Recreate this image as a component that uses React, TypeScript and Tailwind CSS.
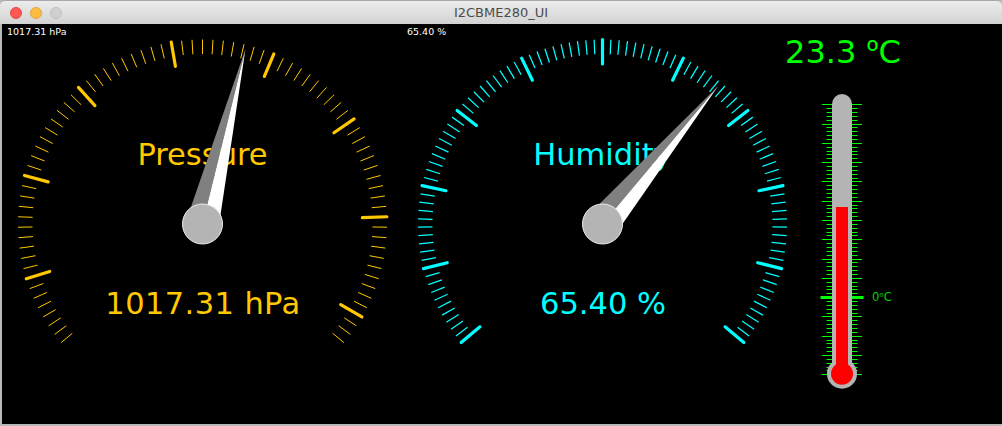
type Tick = { x1: number; y1: number; x2: number; y2: number }

function polar(cx: number, cy: number, r: number, deg: number) {
  const a = (deg * Math.PI) / 180
  return { x: cx + r * Math.sin(a), y: cy - r * Math.cos(a) }
}

function makeTick(cx: number, cy: number, r1: number, r2: number, deg: number): Tick {
  const a = polar(cx, cy, r1, deg)
  const b = polar(cx, cy, r2, deg)
  return { x1: a.x, y1: a.y, x2: b.x, y2: b.y }
}

function Gauge({
  color,
  label,
  value,
  reading,
  steps,
  majorOffset,
  needle,
  minorWidth,
  valueSpacing,
}: {
  color: string
  label: string
  value: string
  reading: string
  steps: number
  majorOffset: number
  needle: number
  minorWidth: number
  valueSpacing: number
}) {
  const cx = 200.5
  const cy = 200
  const step = 260 / steps
  const ticks = Array.from({ length: steps + 1 }, (_, i) => i)
  const tip = polar(cx, cy, 180, needle)
  const baseL = polar(cx, cy, 16.5, needle - 90)
  const baseR = polar(cx, cy, 16.5, needle + 90)

  return (
    <div className="relative w-[400px] shrink-0">
      <span className="absolute left-[5px] top-[2px] text-[9.5px] leading-[12px] text-white">
        {reading}
      </span>
      <svg width="400" height="400" viewBox="0 0 400 400" className="block">
        {ticks.map((i) => {
          const major = i % 10 === majorOffset
          const t = makeTick(cx, cy, 184.5, major ? 160 : 170, -130 + i * step)
          return (
            <line
              key={i}
              {...t}
              stroke={color}
              strokeWidth={major ? 3.2 : minorWidth}
              strokeLinecap={major ? "round" : "butt"}
            />
          )
        })}
        <text x={cx} y={141} textAnchor="middle" fontSize="30.5" fill={color}>
          {label}
        </text>
        <text
          x={cx + 0.5}
          y={290}
          textAnchor="middle"
          fontSize="30.5"
          fill={color}
          letterSpacing={valueSpacing}
        >
          {value}
        </text>
        <polygon points={`${tip.x},${tip.y} ${baseL.x},${baseL.y} ${cx},${cy}`} fill="#808080" />
        <polygon points={`${tip.x},${tip.y} ${baseR.x},${baseR.y} ${cx},${cy}`} fill="#ffffff" />
        <circle cx={cx} cy={cy} r="20" fill="#b4b4b4" stroke="#eeeeee" strokeWidth="1" />
      </svg>
    </div>
  )
}

function Thermometer() {
  const cx = 40
  const top = 80.3
  const step = 270 / 70
  const ticks = Array.from({ length: 71 }, (_, i) => i)

  return (
    <div className="flex-1">
      <div className="flex h-[47px] w-[82px] justify-center pt-[7px]">
        <span className="text-[32px] leading-[40px] whitespace-nowrap text-[#00ff00]">
          23.3 <span className="font-['Noto_Sans',sans-serif]">º</span>C
        </span>
      </div>
      {/* heading above takes 47px, so the drawing starts there */}
      <svg width="200" height="333" viewBox="0 47 200 333" className="block">
        {ticks.map((i) => {
          const y = Math.round(top + i * step) + 0.5
          const zero = i === 50
          const major = i % 5 === 0
          const half = zero ? 21.5 : major ? 20 : 15.5
          return (
            <line
              key={i}
              x1={cx - half}
              x2={cx + half}
              y1={y}
              y2={y}
              stroke="#00ff00"
              strokeWidth={zero ? 3 : 1}
            />
          )
        })}
        <rect x={cx - 10} y={70} width="20" height="280" rx="10" fill="#b4b4b4" />
        <circle cx={cx} cy={349.7} r="15" fill="#b4b4b4" />
        <rect x={cx - 6} y={183} width="12" height="166" fill="#ff0000" />
        <circle cx={cx} cy={349.7} r="11" fill="#ff0000" />
        <text x={70} y={277} fontSize="11.5" fill="#00d000">
          0<tspan className="font-['Noto_Sans',sans-serif]">º</tspan>C
        </text>
      </svg>
    </div>
  )
}

export default function App() {
  return (
    <div className="h-[426px] w-[1002px] overflow-hidden bg-[#b9b9b9] font-['DejaVu_Sans','Noto_Sans',sans-serif]">
      <div className="relative flex h-[24px] items-center justify-center rounded-t-[5px] border-t border-[#a8a8a8] bg-gradient-to-b from-[#ececec] to-[#d3d3d3] pt-[1px]">
        <div className="absolute left-[10px] flex gap-[8px]">
          <span className="h-[12px] w-[12px] rounded-full border border-[#e2463f] bg-[#fc5753]" />
          <span className="h-[12px] w-[12px] rounded-full border border-[#e1a73e] bg-[#fdbc40]" />
          <span className="h-[12px] w-[12px] rounded-full border border-[#c0c0c0] bg-[#d0d0d0]" />
        </div>
        <span className="text-[13px] text-[#4c4c4c]">I2CBME280_UI</span>
      </div>
      <div className="ml-[2px] flex h-[400px] bg-black">
        <Gauge color="#ffc800" label="Pressure" value="1017.31 hPa" reading="1017.31 hPa" steps={80} majorOffset={7} needle={13.8} minorWidth={1} valueSpacing={0.4} />
        <Gauge color="#00ffff" label="Humidity" value="65.40 %" reading="65.40 %" steps={100} majorOffset={0} needle={40} minorWidth={1.25} valueSpacing={0} />
        <Thermometer />
      </div>
    </div>
  )
}
